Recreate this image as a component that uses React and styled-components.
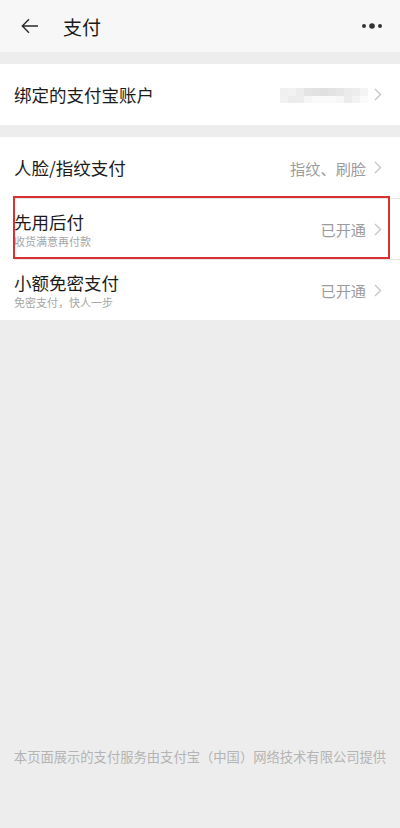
import React from "react";
import styled, { createGlobalStyle } from "styled-components";

const Global = createGlobalStyle`
  html, body {
    margin: 0;
    padding: 0;
    background: #ededed;
    font-family: "Noto Sans CJK SC", "Noto Sans", sans-serif;
  }
  * { box-sizing: border-box; }
`;

const Page = styled.div`
  width: 400px;
  height: 828px;
  background: #ededed;
  display: flex;
  flex-direction: column;
`;

const TopBar = styled.header`
  height: 52px;
  background: #f7f7f7;
  display: flex;
  align-items: center;
  padding: 0 16px 0 20px;
`;

const BackButton = styled.div`
  width: 20px;
  height: 20px;
  display: flex;
  align-items: center;
  justify-content: center;
`;

const Title = styled.h1`
  margin: 0 0 0 23px;
  font-size: 19px;
  font-weight: 400;
  color: #1a1a1a;
  flex: 1;
  line-height: 1;
`;

const Group = styled.section`
  background: #fff;
  margin-top: 12px;
`;

const Row = styled.div`
  height: 61px;
  margin-left: 14px;
  padding-right: 18px;
  display: flex;
  align-items: center;
  position: relative;
  border-top: ${(p) => (p.divider ? "1px solid #e6e6e6" : "none")};
`;

const Highlight = styled.div`
  position: absolute;
  left: -1px;
  right: 10px;
  top: -3px;
  bottom: 0;
  border: 2px solid #d93030;
  pointer-events: none;
`;

const Texts = styled.div`
  flex: 1;
  display: flex;
  flex-direction: column;
  justify-content: center;
`;

const RowTitle = styled.div`
  font-size: 17.5px;
  color: #1c1c1c;
  line-height: 20px;
  margin-top: ${(p) => (p.withSub ? "1px" : "0")};
`;

const RowSub = styled.div`
  font-size: 11px;
  color: #a6a6a6;
  line-height: 14px;
  margin-top: 2px;
`;

const Value = styled.span`
  font-size: 15.2px;
  color: #9c9c9c;
  margin-right: 8px;
`;

const Mosaic = styled.div`
  display: grid;
  grid-template-columns: repeat(11, 8px);
  grid-template-rows: 8px 7px;
  margin-right: 6px;
  margin-top: 2px;
`;

const Cell = styled.div`
  background: ${(p) => p.c};
`;

const Footer = styled.footer`
  margin-top: auto;
  padding: 0 0 62px;
  text-align: center;
  font-size: 13.3px;
  color: #b4b4b4;
  line-height: 18px;
`;

const Chevron = () => (
  <svg width="8" height="13" viewBox="0 0 8 13">
    <path d="M1 1l5.5 5.5L1 12" fill="none" stroke="#c4c4c4" strokeWidth="1.3" />
  </svg>
);

const mosaic = [
  ["#f0f0f0", "#f2f2f2", "#ececec", "#e4e4e4", "#e2e2e2", "#e0e0e0", "#e3e3e3", "#e6e6e6", "#ebebeb", "#ededed", "#f4f4f4"],
  ["#f2f2f2", "#ececec", "#ededed", "#f6f6f6", "#fafafa", "#fafafa", "#fafafa", "#f7f7f7", "#ececec", "#f3f3f3", "#fbfbfb"],
];

const items = [
  { title: "人脸/指纹支付", value: "指纹、刷脸" },
  { title: "先用后付", sub: "收货满意再付款", value: "已开通", marked: true },
  { title: "小额免密支付", sub: "免密支付，快人一步", value: "已开通" },
];

export default function App() {
  return (
    <Page>
      <Global />
      <TopBar>
        <BackButton>
          <svg width="18" height="16" viewBox="0 0 18 16">
            <path d="M17 8H1.5M8 1.2L1.3 8 8 14.8" fill="none" stroke="#2a2a2a" strokeWidth="1.4" />
          </svg>
        </BackButton>
        <Title>支付</Title>
        <svg width="24" height="8" viewBox="0 0 24 8">
          <circle cx="4" cy="4" r="2" fill="#333" />
          <circle cx="12" cy="4" r="2.8" fill="#333" />
          <circle cx="20" cy="4" r="2" fill="#333" />
        </svg>
      </TopBar>

      <Group>
        <Row>
          <Texts>
            <RowTitle>绑定的支付宝账户</RowTitle>
          </Texts>
          <Mosaic>
            {mosaic.flat().map((c, i) => (
              <Cell key={i} c={c} />
            ))}
          </Mosaic>
          <Chevron />
        </Row>
      </Group>

      <Group>
        {items.map((it, i) => (
          <Row key={it.title} divider={i > 0}>
            {it.marked && <Highlight />}
            <Texts>
              <RowTitle withSub={!!it.sub}>{it.title}</RowTitle>
              {it.sub && <RowSub>{it.sub}</RowSub>}
            </Texts>
            <Value>{it.value}</Value>
            <Chevron />
          </Row>
        ))}
      </Group>

      <Footer>本页面展示的支付服务由支付宝（中国）网络技术有限公司提供</Footer>
    </Page>
  );
}
